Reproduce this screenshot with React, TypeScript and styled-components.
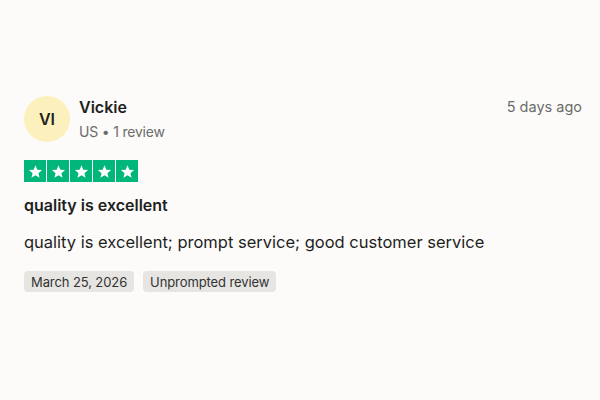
import React from "react";
import styled, { createGlobalStyle } from "styled-components";

const Global = createGlobalStyle`
  html, body { margin: 0; padding: 0; background: #fcfbf9; }
  body { font-family: Inter, "Noto Sans", sans-serif; color: #1f1f1f; }
`;

const Card = styled.div`
  width: 600px;
  height: 400px;
  box-sizing: border-box;
  padding: 96px 18px 0 24px;
  display: flex;
  flex-direction: column;
`;

const Header = styled.div`
  display: flex;
  align-items: flex-start;
  gap: 9px;
`;

const Avatar = styled.div`
  width: 46px;
  height: 46px;
  border-radius: 50%;
  background: #fcf1bd;
  display: flex;
  align-items: center;
  justify-content: center;
  font-size: 16px;
  font-weight: 600;
  color: #1f1f1f;
  flex-shrink: 0;
`;

const Who = styled.div`
  display: flex;
  flex-direction: column;
  flex: 1;
  padding-top: 1px;
`;

const Name = styled.div`
  font-size: 16px;
  font-weight: 600;
  line-height: 20px;
`;

const Meta = styled.div`
  font-size: 14px;
  color: #6b6b6b;
  line-height: 20px;
  margin-top: 5px;
  letter-spacing: -0.2px;
`;

const When = styled.div`
  font-size: 14.5px;
  color: #6b6b6b;
  line-height: 20px;
  padding-top: 1px;
`;

const Stars = styled.div`
  display: flex;
  gap: 1px;
  margin-top: 18px;
`;

const StarBox = styled.div`
  width: 22px;
  height: 22px;
  background: #00b67a;
  display: flex;
  align-items: center;
  justify-content: center;
`;

const Title = styled.div`
  font-size: 16px;
  font-weight: 600;
  line-height: 20px;
  margin-top: 13px;
`;

const Body = styled.div`
  font-size: 16.5px;
  line-height: 22px;
  margin-top: 16px;
`;

const Tags = styled.div`
  display: flex;
  gap: 9px;
  margin-top: 18px;
`;

const Tag = styled.div`
  background: #e6e5e2;
  border-radius: 4px;
  height: 21px;
  padding: 0 7px;
  display: flex;
  align-items: center;
  font-size: 13px;
  color: #333;
  letter-spacing: -0.1px;
`;

const Star = () => (
  <svg width="15" height="15" viewBox="0 0 24 24">
    <path
      fill="#fff"
      d="M12 2l2.9 7.1 7.6.6-5.8 4.9 1.8 7.4L12 18l-6.5 4 1.8-7.4L1.5 9.7l7.6-.6z"
    />
  </svg>
);

export default function App() {
  return (
    <>
      <Global />
      <Card>
        <Header>
          <Avatar>VI</Avatar>
          <Who>
            <Name>Vickie</Name>
            <Meta>US • 1 review</Meta>
          </Who>
          <When>5 days ago</When>
        </Header>
        <Stars>
          {[0, 1, 2, 3, 4].map((i) => (
            <StarBox key={i}>
              <Star />
            </StarBox>
          ))}
        </Stars>
        <Title>quality is excellent</Title>
        <Body>quality is excellent; prompt service; good customer service</Body>
        <Tags>
          <Tag>March 25, 2026</Tag>
          <Tag>Unprompted review</Tag>
        </Tags>
      </Card>
    </>
  );
}
